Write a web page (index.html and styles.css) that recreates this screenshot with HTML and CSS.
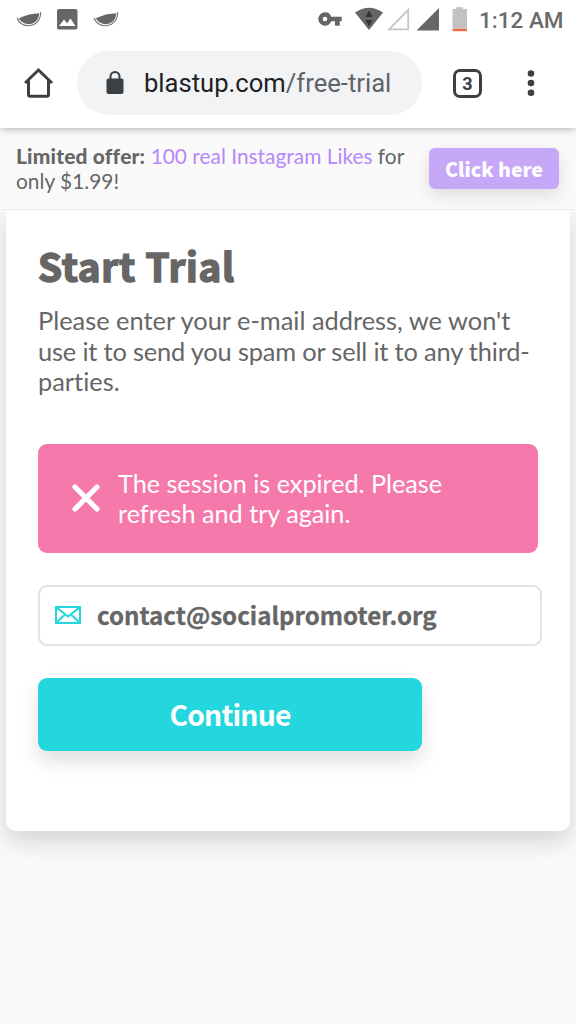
FILE: index.html
```html
<!DOCTYPE html>
<html lang="en">
<head>
  <meta charset="UTF-8" />
  <title>Start Trial</title>
  <link rel="stylesheet" href="styles.css">
</head>
<body>
  <div class="status-bar">
    <svg class="status-icons" width="120" height="40" viewBox="0 0 120 40">
      <g id="melon">
        <path d="M18.800 18.300 Q29 13.500 39.300 13.300 C38.500 26.500 23.500 27 18.800 18.300Z" fill="#666"/>
        <path d="M17.200 18 C20.500 29.500 41 28.500 40.700 12" fill="none" stroke="#777" stroke-width="1.100"/>
      </g>
      <rect x="57" y="9" width="20.500" height="20.500" rx="2" fill="#666"/>
      <path d="M59 26 l5-6.500 3 3.800 3.500-4.800 5 7.500z" fill="#fff"/>
      <use href="#melon" x="77"/>
    </svg>
    <svg class="status-right" width="162" height="40" viewBox="0 0 162 40">
      <path d="M7 12.300 a6.700 6.700 0 1 0 6.300 9 h3.700 v4.500 h4.700 v-4.500 h2 v-4.600 H13.300 a6.700 6.700 0 0 0-6.300-4.400z M7 16.700 a2.300 2.300 0 1 1 0 4.600 a2.300 2.300 0 0 1 0-4.600z" fill="#666" fill-rule="evenodd"/>
      <path d="M37 12.500 Q51 3 65 12.500 L51 30z" fill="#666"/>
      <path d="M51 10.500 l3.500 6.500 h-7z M51 26.500 l3.500-6.500 h-7z" fill="#333"/>
      <path d="M71 29.300 H90.200 V10z" fill="none" stroke="#c6c6c6" stroke-width="1.800"/>
      <path d="M98.500 30.500 H121 V8z" fill="#666"/>
      <path d="M134.500 9 h3.500 v-1.800 h7 v1.800 h4 v20 h-14.500z" fill="#c2c2c2"/>
      <path d="M134.500 29 h14.500 v2.200 h-14.500z" fill="#f4683c"/>
    </svg>
    <span class="clock">1:12 AM</span>
  </div>

  <div class="toolbar">
    <svg class="home" width="30" height="32" viewBox="0 0 30 32">
      <path d="M1 16 L14.500 3 L28 16 M4.500 13.500 V27.500 q0 1.700 1.700 1.700 H22.800 q1.700 0 1.700-1.700 V13.500" fill="none" stroke="#3c4043" stroke-width="3"/>
    </svg>
    <div class="address">
      <svg width="18" height="24" viewBox="0 0 18 24">
        <rect x="0.500" y="7.500" width="17" height="15.500" rx="2" fill="#3c4043"/>
        <path d="M4.500 8 V5.500 a4.500 4.500 0 0 1 9 0 V8" fill="none" stroke="#3c4043" stroke-width="2"/>
      </svg>
      <span class="url">blastup.com<span class="path">/free-trial</span></span>
    </div>
    <div class="tabs">3</div>
    <svg class="dots" width="8" height="28" viewBox="0 0 8 28">
      <g fill="#3c4043"><circle cx="4" cy="4.500" r="3.300"/><circle cx="4" cy="14" r="3.300"/><circle cx="4" cy="23.700" r="3.300"/></g>
    </svg>
  </div>

  <div class="offer">
    <p><b>Limited offer:</b> <a>100 real Instagram Likes</a> for<br>only $1.99!</p>
    <button class="offer-button">Click here</button>
  </div>

  <div class="card">
    <h1>Start Trial</h1>
    <p class="intro">Please enter your e-mail address, we won't<br><span class="tight">use it to send you spam or sell it to any third-</span><br>parties.</p>
    <div class="alert">
      <svg width="28" height="28" viewBox="0 0 28 28">
        <path d="M3 3 L25 25 M25 3 L3 25" stroke="#fff" stroke-width="5.200" stroke-linecap="round"/>
      </svg>
      <span>The session is expired. Please<br>refresh and try again.</span>
    </div>
    <div class="email">
      <svg width="26" height="18" viewBox="0 0 26 18">
        <path d="M1 1 H25 V17 H1z M1.500 1.500 L13 10.500 L24.500 1.500 M1.500 16.500 L10 8.500 M24.500 16.500 L16 8.500" fill="none" stroke="#24d6dd" stroke-width="2"/>
      </svg>
      <span>contact@socialpromoter.org</span>
    </div>
    <button class="continue">Continue</button>
  </div>
</body>
</html>
```

FILE: styles.css
```css
* { box-sizing: border-box; }
body { margin: 0; height: 1024px; overflow: hidden; background: #fafafa; color: #666; font-family: Lato, sans-serif; font-variant-ligatures: none; }
h1, p { margin: 0; }
button { border: none; padding: 0; color: #fff; }
svg { flex: none; }

.status-bar { display: flex; position: relative; z-index: 1; height: 40px; background: #fff; }
.status-icons { margin-right: 198px; }
.clock { margin-left: -1px; font: 500 22.5px/40px Roboto, sans-serif; white-space: nowrap; color: #6a6a6a; }

.toolbar { display: flex; align-items: center; position: relative; height: 88px; padding: 0 0 2px 24px; background: #fff; box-shadow: 0 1px 8px rgba(0,0,0,.3); }
.address { display: flex; align-items: center; width: 345px; height: 64px; margin-left: 23px; padding-left: 29px; border-radius: 32px; background: #f1f3f4; }
.url { margin-left: 20px; font: 25.6px/42px Roboto, sans-serif; color: #202124; white-space: nowrap; }
.path { color: #5f6368; }
.tabs { width: 29px; height: 29px; margin-left: 31px; border: 3px solid #3c4043; border-radius: 7px; font: bold 18px/23px Roboto, sans-serif; text-align: center; color: #3c4043; }
.dots { margin-left: 45px; }

.offer { display: flex; justify-content: space-between; height: 82px; padding: 16px 17px 0 16px; border-bottom: 1px solid #eee; font-size: 20.9px; line-height: 24.5px; white-space: nowrap; }
.offer b { font-weight: 900; letter-spacing: .2px; }
.offer a { color: #b588fb; }
.offer-button { width: 130px; height: 41px; margin-top: 4px; border-radius: 6px; background: #c7a8f8; box-shadow: 0 6px 18px rgba(0,0,0,.12); font: 900 19.5px/34px "Noto Sans CJK SC", sans-serif; }

.card { height: 621px; margin: 0 6px; padding: 32px; border-radius: 0 0 10px 10px; background: #fff; box-shadow: 0 10px 26px rgba(0,0,0,.16); clip-path: inset(0 -6px -60px -6px); }
.card h1 { font: bold 38.5px/46px "Noto Sans CJK SC", sans-serif; height: 50px; letter-spacing: .8px; -webkit-text-stroke: 1.6px #666; white-space: nowrap; }
.intro { margin-top: 13px; font-size: 25.4px; line-height: 30.5px; white-space: nowrap; }
.tight { letter-spacing: -.17px; }
.alert { display: flex; align-items: center; width: 500px; height: 109px; margin-top: 47px; padding-left: 34px; border-radius: 9px; background: #f57aab; color: #fff; font-size: 25.2px; line-height: 30.5px; white-space: nowrap; }
.alert span { margin-left: 18px; }
.email { display: flex; align-items: center; width: 504px; height: 61px; margin-top: 32px; padding-left: 15px; border: 2px solid #e2e2e2; border-radius: 9px; }
.email span { margin-left: 16px; font: bold 24.1px/40px "Noto Sans CJK SC", sans-serif; -webkit-text-stroke: .3px #666; }
.continue { display: block; width: 384px; height: 73px; margin-top: 32px; border-radius: 9px; background: #24d6dd; box-shadow: 0 10px 20px rgba(0,0,0,.13); font: bold 28.3px/40px "Noto Sans CJK SC", sans-serif; letter-spacing: -.8px; }
```
